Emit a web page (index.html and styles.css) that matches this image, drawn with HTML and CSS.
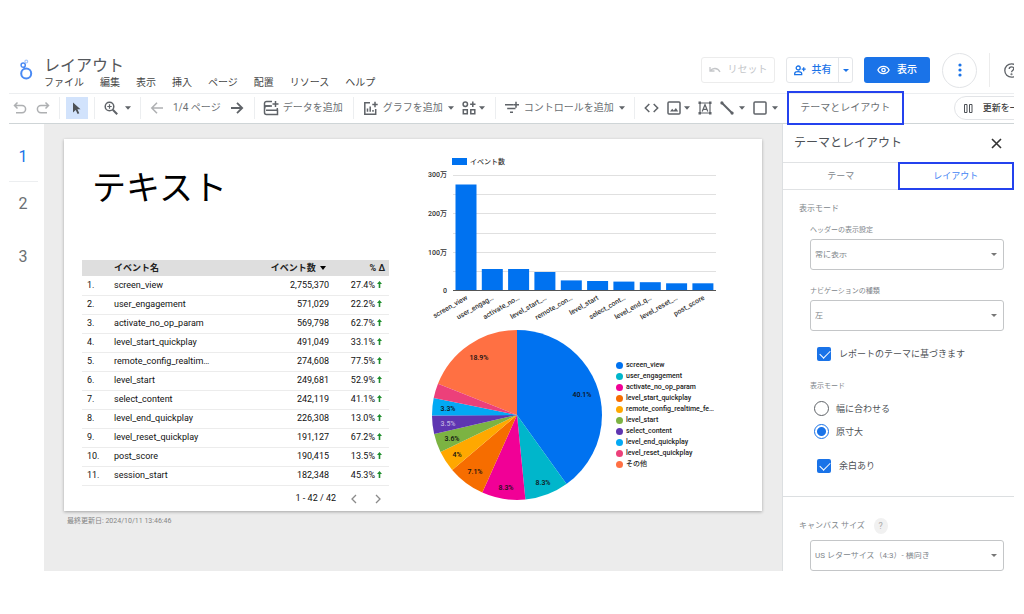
FILE: index.html
```html
<!DOCTYPE html>
<html lang="ja">
<head>
<meta charset="utf-8">
<title>レイアウト</title>
<link rel="stylesheet" href="styles.css">
</head>
<body>
<div class="app">
  <header class="header">
    <svg class="logo" width="14" height="22" viewBox="0 0 14 22" fill="none" stroke="#4a8af4">
      <circle cx="7.200" cy="14.600" r="5" stroke-width="2"/>
      <circle cx="4.200" cy="6.200" r="2.100" stroke-width="1.500"/>
      <circle cx="7.300" cy="2.600" r="1.400" stroke="#a9c8fa" stroke-width="1.200"/>
      <path d="M4.800 8.200l1 1.600" stroke-width="1.400"/>
    </svg>
    <div class="heading">
      <h1 class="doc-title">レイアウト</h1>
      <nav class="menu">
        <button>ファイル</button><button>編集</button><button>表示</button><button>挿入</button><button>ページ</button><button>配置</button><button>リソース</button><button>ヘルプ</button>
      </nav>
    </div>
    <div class="actions">
      <button class="btn btn-reset" disabled>
        <svg width="12" height="8" viewBox="0 0 12 8" fill="none" stroke="currentColor" stroke-width="1.300"><path d="M1 1v4h4.500M1.200 4.800C3.500 1.800 8.500 1.300 11 6"/></svg>
        リセット
      </button>
      <div class="split">
        <button class="btn-share">
          <svg width="12" height="11" viewBox="0 0 12 11" fill="none" stroke="currentColor" stroke-width="1.300"><circle cx="4.200" cy="3" r="2"/><path d="M.7 9.700V8.500c0-2.400 7-2.400 7 0v1.200zM9.700 2.200v4M7.700 4.200h4"/></svg>
          共有
        </button>
        <button class="btn-share-more" aria-label="共有オプション"><svg width="6" height="3" viewBox="0 0 6 3"><path d="M0 0h6L3 3z" fill="currentColor"/></svg></button>
      </div>
      <button class="btn btn-view">
        <svg width="13" height="10" viewBox="0 0 13 10" fill="none" stroke="currentColor" stroke-width="1.300"><path d="M.9 5C3.200.2 9.800.2 12.100 5 9.800 9.800 3.200 9.800.9 5z"/><circle cx="6.500" cy="5" r="1.700"/></svg>
        表示
      </button>
      <button class="btn-more" aria-label="その他"><svg width="4" height="14" viewBox="0 0 4 14" fill="currentColor"><circle cx="2" cy="2" r="1.600"/><circle cx="2" cy="7" r="1.600"/><circle cx="2" cy="12" r="1.600"/></svg></button>
      <div class="help-clip">
        <button class="btn-help" aria-label="ヘルプ"><svg width="15" height="15" viewBox="0 0 15 15" fill="none" stroke="currentColor" stroke-width="1.300"><circle cx="7.500" cy="7.500" r="6.700"/><path d="M5.200 6c0-3 4.600-2.800 4.600-.3 0 1.500-2.200 1.700-2.200 3.600"/><circle cx="7.500" cy="11.200" r=".4"/></svg></button>
      </div>
    </div>
  </header>

  <div class="toolbar">
    <div class="group g-history">
      <button class="faded" aria-label="元に戻す"><svg width="14" height="14" viewBox="0 0 14 14" class="line"><path d="M4.500 1.500L1.500 4.500l3 3M1.700 4.500h7.300a3.600 3.600 0 0 1 0 7.200H3"/></svg></button>
      <button class="faded" aria-label="やり直し"><svg width="14" height="14" viewBox="0 0 14 14" class="line"><path d="M9.500 1.500l3 3-3 3M12.300 4.500H5a3.600 3.600 0 0 0 0 7.200h6"/></svg></button>
    </div>
    <div class="group g-select">
      <button class="cursor" aria-label="選択"><svg width="10" height="13" viewBox="0 0 10 13"><path d="M1 .5l7.500 6.800H5.400l1.900 4-1.700.8-1.900-4L1 10.500z" fill="#4d5156"/></svg></button>
    </div>
    <div class="group g-zoom">
      <button aria-label="ズーム"><svg width="14" height="14" viewBox="0 0 14 14" class="line"><circle cx="5.500" cy="5.500" r="4.300"/><path d="M8.800 8.800l4.400 4.400" stroke-width="2"/><path d="M3.300 5.500h4.400M5.500 3.300v4.400" stroke-width="1.200"/></svg><svg class="caret" width="6" height="4" viewBox="0 0 7 4"><path d="M0 0h7L3.500 4z"/></svg></button>
    </div>
    <div class="group g-page">
      <button class="faded" aria-label="前のページ"><svg width="14" height="14" viewBox="0 0 14 14" class="line"><path d="M13 7H2M7 1.800L1.800 7 7 12.200"/></svg></button>
      <span>1/4 ページ</span>
      <button aria-label="次のページ"><svg width="14" height="14" viewBox="0 0 14 14" class="line strong"><path d="M1 7h11M7 1.800L12.200 7 7 12.200"/></svg></button>
    </div>
    <div class="group g-data">
      <button class="labelled"><svg width="16" height="16" viewBox="0 0 16 16" class="line"><path d="M9 1.500H3.500a2 2 0 0 0-2 2v9a2 2 0 0 0 2 2h11v-4.200H3M1.500 10.300c0-3 .5-4.200 2-4.200H9M14.300 8v3"/><path d="M1.500 6h6M12.500 1v6M9.500 4h6"/></svg>データを追加</button>
    </div>
    <div class="group g-chart">
      <button class="labelled"><svg width="15" height="15" viewBox="0 0 15 15" class="line"><path d="M7 1.800H1.800v11.400h10.900V8M4.500 10.800V7.500M7.200 10.800V5.500M10 10.800V9M12 .8v5.400M9.300 3.500h5.400"/></svg>グラフを追加<svg class="caret" width="6" height="4" viewBox="0 0 7 4"><path d="M0 0h7L3.500 4z"/></svg></button>
      <button class="tight" aria-label="コミュニティ ビジュアリゼーション"><svg width="14" height="14" viewBox="0 0 14 14" class="line"><circle cx="3.300" cy="3.300" r="2.200"/><path d="M1.300 8.800h4v4h-4zM8.800 8.800h4v4h-4zM10.800.6v5.400M8.100 3.300h5.400"/></svg><svg class="caret" width="6" height="4" viewBox="0 0 7 4"><path d="M0 0h7L3.500 4z"/></svg></button>
    </div>
    <div class="group">
      <button class="labelled"><svg width="14" height="14" viewBox="0 0 14 14" class="line"><path d="M0 3.800h8M2.200 7.500h8.300M5 11.300h3M11 .8v6M8.200 3.800H14"/></svg>コントロールを追加<svg class="caret" width="6" height="4" viewBox="0 0 7 4"><path d="M0 0h7L3.500 4z"/></svg></button>
    </div>
    <div class="group g-insert">
      <button aria-label="URL の埋め込み"><svg width="15" height="14" viewBox="0 0 15 14" class="line"><path d="M5.300 3L1.300 7l4 4M9.700 3l4 4-4 4"/></svg></button>
      <button class="tight" aria-label="画像"><svg width="14" height="14" viewBox="0 0 14 14" class="line"><rect x="1" y="1" width="12" height="12" rx="1"/><path d="M3 10.500l2.200-2.800 1.600 1.800L8.900 7l2.300 3.500z" fill="#5f6368" stroke="none"/></svg><svg class="caret" width="6" height="4" viewBox="0 0 7 4"><path d="M0 0h7L3.500 4z"/></svg></button>
      <button aria-label="テキスト"><svg width="14" height="14" viewBox="0 0 14 14" class="line"><path d="M2 2h10v10H2z" stroke-width="1.200"/><path d="M.5.500h2.500v2.500H.5zM11 .5h2.500v2.500H11zM.5 11h2.500v2.500H.5zM11 11h2.500v2.500H11z" fill="#5f6368" stroke="none"/><path d="M4.200 10.600L7 3.700l2.800 6.900M5.100 8.300h3.800" stroke-width="1.200"/></svg></button>
      <button class="wide" aria-label="線"><svg width="14" height="14" viewBox="0 0 14 14" class="line"><path d="M2 2l10 10" stroke-width="2"/><circle cx="1.900" cy="1.900" r="1.600" fill="#5f6368" stroke="none"/><circle cx="12.100" cy="12.100" r="1.600" fill="#5f6368" stroke="none"/></svg><svg class="caret" width="6" height="4" viewBox="0 0 7 4"><path d="M0 0h7L3.500 4z"/></svg></button>
      <button class="wide" aria-label="図形"><svg width="14" height="14" viewBox="0 0 14 14" class="line"><rect x="1" y="1" width="12" height="12" rx="1"/></svg><svg class="caret" width="6" height="4" viewBox="0 0 7 4"><path d="M0 0h7L3.500 4z"/></svg></button>
    </div>
    <button class="theme-btn">テーマとレイアウト</button>
    <div class="refresh">
      <button class="pill"><svg width="9" height="9" viewBox="0 0 9 9" fill="none" stroke="#4d5156" stroke-width="1"><path d="M.5.500h2.500v8H.5zM5.500.500H8v8H5.500z"/></svg>更新を一</button>
    </div>
  </div>

  <div class="workspace">
    <ol class="pages">
      <li class="current"><a href="#p1">1</a></li>
      <li><a href="#p2">2</a></li>
      <li><a href="#p3">3</a></li>
    </ol>

    <main class="canvas">
      <section class="report">
        <div class="col-table">
          <h2 class="report-title">テキスト</h2>
          <table class="events">
            <colgroup><col class="c-no"><col class="c-name"><col class="c-count"><col class="c-delta"></colgroup>
            <thead><tr><th></th><th>イベント名</th><th class="num">イベント数 <svg class="sort" width="6" height="4" viewBox="0 0 6 4"><path d="M0 0h6L3 4z"/></svg></th><th class="num last">% Δ</th></tr></thead>
            <tbody>
              <tr><td>1.</td><td>screen_view</td><td class="num">2,755,370</td><td class="num last">27.4%<svg class="up" width="5" height="7" viewBox="0 0 5 7"><path d="M2.500 0L5 3H3.300v4H1.700V3H0z"/></svg></td></tr>
              <tr><td>2.</td><td>user_engagement</td><td class="num">571,029</td><td class="num last">22.2%<svg class="up" width="5" height="7" viewBox="0 0 5 7"><path d="M2.500 0L5 3H3.300v4H1.700V3H0z"/></svg></td></tr>
              <tr><td>3.</td><td>activate_no_op_param</td><td class="num">569,798</td><td class="num last">62.7%<svg class="up" width="5" height="7" viewBox="0 0 5 7"><path d="M2.500 0L5 3H3.300v4H1.700V3H0z"/></svg></td></tr>
              <tr><td>4.</td><td>level_start_quickplay</td><td class="num">491,049</td><td class="num last">33.1%<svg class="up" width="5" height="7" viewBox="0 0 5 7"><path d="M2.500 0L5 3H3.300v4H1.700V3H0z"/></svg></td></tr>
              <tr><td>5.</td><td>remote_config_realtim…</td><td class="num">274,608</td><td class="num last">77.5%<svg class="up" width="5" height="7" viewBox="0 0 5 7"><path d="M2.500 0L5 3H3.300v4H1.700V3H0z"/></svg></td></tr>
              <tr><td>6.</td><td>level_start</td><td class="num">249,681</td><td class="num last">52.9%<svg class="up" width="5" height="7" viewBox="0 0 5 7"><path d="M2.500 0L5 3H3.300v4H1.700V3H0z"/></svg></td></tr>
              <tr><td>7.</td><td>select_content</td><td class="num">242,119</td><td class="num last">41.1%<svg class="up" width="5" height="7" viewBox="0 0 5 7"><path d="M2.500 0L5 3H3.300v4H1.700V3H0z"/></svg></td></tr>
              <tr><td>8.</td><td>level_end_quickplay</td><td class="num">226,308</td><td class="num last">13.0%<svg class="up" width="5" height="7" viewBox="0 0 5 7"><path d="M2.500 0L5 3H3.300v4H1.700V3H0z"/></svg></td></tr>
              <tr><td>9.</td><td>level_reset_quickplay</td><td class="num">191,127</td><td class="num last">67.2%<svg class="up" width="5" height="7" viewBox="0 0 5 7"><path d="M2.500 0L5 3H3.300v4H1.700V3H0z"/></svg></td></tr>
              <tr><td>10.</td><td>post_score</td><td class="num">190,415</td><td class="num last">13.5%<svg class="up" width="5" height="7" viewBox="0 0 5 7"><path d="M2.500 0L5 3H3.300v4H1.700V3H0z"/></svg></td></tr>
              <tr><td>11.</td><td>session_start</td><td class="num">182,348</td><td class="num last">45.3%<svg class="up" width="5" height="7" viewBox="0 0 5 7"><path d="M2.500 0L5 3H3.300v4H1.700V3H0z"/></svg></td></tr>
            </tbody>
          </table>
          <div class="pager">
            <span>1 - 42 / 42</span>
            <button aria-label="前へ"><svg width="6" height="10" viewBox="0 0 6 10"><path d="M5 1L1 5l4 4"/></svg></button>
            <button aria-label="次へ"><svg width="6" height="10" viewBox="0 0 6 10"><path d="M1 1l4 4-4 4"/></svg></button>
          </div>
        </div>

        <div class="col-charts">
          <svg class="bars" viewBox="0 0 290 170">
            <rect x="25" y="3" width="15" height="7" fill="#0072f0"/>
            <text x="43" y="9">イベント数</text>
            <g class="grid"><path d="M26 20.500h263M26 39.500h263M26 58.500h263M26 78.500h263M26 97.500h263M26 116.500h263"/></g>
            <g class="axis-y"><text x="20" y="22">300万</text><text x="20" y="61">200万</text><text x="20" y="100">100万</text><text x="20" y="138">0</text></g>
            <g fill="#0072f0">
              <rect x="28.500" y="29.500" width="21" height="106"/>
              <rect x="54.800" y="114" width="21" height="21.500"/>
              <rect x="81.100" y="114" width="21" height="21.500"/>
              <rect x="107.400" y="117" width="21" height="18.500"/>
              <rect x="133.800" y="125.400" width="21" height="10.100"/>
              <rect x="160.100" y="126" width="21" height="9.500"/>
              <rect x="186.400" y="126.600" width="21" height="8.900"/>
              <rect x="212.800" y="127.200" width="21" height="8.300"/>
              <rect x="239.100" y="128.300" width="21" height="7.200"/>
              <rect x="265.400" y="128.300" width="21" height="7.200"/>
            </g>
            <path d="M26 135.500h263" stroke="#555"/>
            <g class="axis-x">
              <text transform="translate(41 144) rotate(-30)">screen_view</text>
              <text transform="translate(67 144) rotate(-30)">user_engag…</text>
              <text transform="translate(93 144) rotate(-30)">activate_no…</text>
              <text transform="translate(120 144) rotate(-30)">level_start_…</text>
              <text transform="translate(146 144) rotate(-30)">remote_con…</text>
              <text transform="translate(172 144) rotate(-30)">level_start</text>
              <text transform="translate(199 144) rotate(-30)">select_cont…</text>
              <text transform="translate(225 144) rotate(-30)">level_end_q…</text>
              <text transform="translate(251 144) rotate(-30)">level_reset_…</text>
              <text transform="translate(278 144) rotate(-30)">post_score</text>
            </g>
          </svg>
          <div class="pie-row">
            <svg class="pie" viewBox="0 0 170 170">
              <g fill="none" stroke-width="85" transform="rotate(-90 85 85)">
                <circle cx="85" cy="85" r="42.500" pathLength="100" stroke="#ff7043" stroke-dasharray="19 81" stroke-dashoffset="-81"/>
                <circle cx="85" cy="85" r="42.500" pathLength="100" stroke="#0072f0" stroke-dasharray="40.100 59.900"/>
                <circle cx="85" cy="85" r="42.500" pathLength="100" stroke="#00b6cb" stroke-dasharray="8.300 91.700" stroke-dashoffset="-40.100"/>
                <circle cx="85" cy="85" r="42.500" pathLength="100" stroke="#f10096" stroke-dasharray="8.300 91.700" stroke-dashoffset="-48.400"/>
                <circle cx="85" cy="85" r="42.500" pathLength="100" stroke="#f66d00" stroke-dasharray="7.100 92.900" stroke-dashoffset="-56.700"/>
                <circle cx="85" cy="85" r="42.500" pathLength="100" stroke="#ffa800" stroke-dasharray="4 96" stroke-dashoffset="-63.800"/>
                <circle cx="85" cy="85" r="42.500" pathLength="100" stroke="#7cb342" stroke-dasharray="3.600 96.400" stroke-dashoffset="-67.800"/>
                <circle cx="85" cy="85" r="42.500" pathLength="100" stroke="#5e35b1" stroke-dasharray="3.500 96.500" stroke-dashoffset="-71.400"/>
                <circle cx="85" cy="85" r="42.500" pathLength="100" stroke="#03a9f4" stroke-dasharray="3.300 96.700" stroke-dashoffset="-74.900"/>
                <circle cx="85" cy="85" r="42.500" pathLength="100" stroke="#ec407a" stroke-dasharray="2.800 97.200" stroke-dashoffset="-78.200"/>
              </g>
              <g class="shares">
                <text x="150" y="67">40.1%</text><text x="111" y="155">8.3%</text><text x="74" y="160">8.3%</text><text x="43" y="144">7.1%</text><text x="25" y="127">4%</text><text x="20" y="111">3.6%</text><text x="16" y="96" class="light">3.5%</text><text x="16" y="81">3.3%</text><text x="47" y="30">18.9%</text>
              </g>
            </svg>
            <ul class="legend">
              <li class="k1">screen_view</li>
              <li class="k2">user_engagement</li>
              <li class="k3">activate_no_op_param</li>
              <li class="k4">level_start_quickplay</li>
              <li class="k5">remote_config_realtime_fe…</li>
              <li class="k6">level_start</li>
              <li class="k7">select_content</li>
              <li class="k8">level_end_quickplay</li>
              <li class="k9">level_reset_quickplay</li>
              <li class="k10">その他</li>
            </ul>
          </div>
        </div>
      </section>
      <p class="updated">最終更新日: 2024/10/11 13:46:46</p>
    </main>

    <aside class="panel">
      <div class="panel-head">
        <h2>テーマとレイアウト</h2>
        <button aria-label="閉じる"><svg width="11" height="11" viewBox="0 0 11 11"><path d="M1 1l9 9M10 1l-9 9" stroke="#333" stroke-width="1.600"/></svg></button>
      </div>
      <div class="tabs"><button>テーマ</button><button class="active">レイアウト</button></div>
      <div class="section">
        <h3>表示モード</h3>
        <div class="fields">
          <label class="caption" for="head">ヘッダーの表示設定</label>
          <div class="select"><select id="head"><option>常に表示</option></select></div>
          <label class="caption second" for="nav">ナビゲーションの種類</label>
          <div class="select"><select id="nav"><option>左</option></select></div>
          <label class="check"><input type="checkbox" checked>レポートのテーマに基づきます</label>
          <fieldset>
            <legend class="caption">表示モード</legend>
            <label class="radio"><input type="radio" name="mode">幅に合わせる</label>
            <label class="radio"><input type="radio" name="mode" checked>原寸大</label>
          </fieldset>
          <label class="check"><input type="checkbox" checked>余白あり</label>
        </div>
      </div>
      <div class="section canvas-size">
        <h3><label for="size">キャンバス サイズ</label><button class="hint" aria-label="ヘルプ">?</button></h3>
        <div class="fields"><div class="select"><select id="size"><option>US レターサイズ（4:3）- 横向き</option></select></div></div>
      </div>
    </aside>
  </div>
</div>
</body>
</html>
```
FILE: styles.css
```css
* { box-sizing: border-box; }
body {
  margin: 0;
  background: #fff;
  color: #5f6368;
  font: 10px/1 Roboto, "Noto Sans CJK JP", sans-serif;
}
button {
  display: flex;
  align-items: center;
  justify-content: center;
  flex-shrink: 0;
  padding: 0;
  border: 0;
  background: none;
  color: inherit;
  font: inherit;
  line-height: 14px;
  white-space: nowrap;
}
h1, h2, h3, p, ul, ol { margin: 0; padding: 0; font-weight: 400; list-style: none; }
svg { display: block; flex-shrink: 0; }
.app { padding: 50px 10px 42px 9px; overflow: hidden; }

/* header */
.header { display: flex; height: 43px; }
.logo { margin: 9px 11px 0 10px; }
.heading { padding-top: 6px; }
.doc-title { color: #55585c; font-size: 16px; line-height: 20px; }
.menu { display: flex; gap: 16px; color: #444; }
.actions { display: flex; align-items: center; margin-left: auto; padding-bottom: 3px; }
.btn { height: 26px; gap: 7px; border-radius: 3px; }
.btn-reset { width: 74px; margin-right: 11px; border: 1px solid #ececec; color: #c4c6c9; }
.split { display: flex; height: 26px; margin-right: 11px; border: 1px solid #e4e6e9; border-radius: 3px; color: #1a73e8; font-weight: 500; }
.btn-share { width: 51px; gap: 6px; }
.btn-share-more { width: 14px; border-left: 1px solid #e4e6e9; }
.btn-view { width: 66px; margin-right: 12px; background: #1a73e8; color: #fff; font-weight: 500; }
.btn-more { width: 35px; height: 35px; margin-right: 12px; border: 1px solid #e2e4e7; border-radius: 50%; color: #1a73e8; }
.help-clip { display: flex; align-items: center; width: 25px; height: 34px; padding-left: 14px; border-left: 1px solid #ececec; overflow: hidden; }

/* toolbar */
.toolbar { display: flex; align-items: center; height: 31px; padding-bottom: 1px; border-top: 1px solid #eceef0; border-bottom: 1px solid #cfd5d7; color: #6b6f73; }
.line { fill: none; stroke: #5f6368; stroke-width: 1.5; }
.strong { stroke-width: 1.8; }
.faded { opacity: .5; }
.caret { fill: #5f6368; }
.group { display: flex; align-items: center; flex-shrink: 0; gap: 9px; height: 22px; padding: 0 9px; border-right: 1px solid #eceef0; white-space: nowrap; }
.group button { gap: 5px; }
.group .tight { gap: 3px; }
.g-history { padding-left: 4px; }
.g-select { padding: 0 6px; }
.cursor { width: 22px; height: 22px; background: #d2e3fc; }
.g-zoom button { gap: 7px; }
.g-data { padding: 0 10px 0 8px; }
.g-data .labelled { gap: 4px; }
.g-chart { gap: 8px; }
.g-chart, .g-page { padding-right: 10px; }
.g-insert { gap: 8px; border: 0; }
.theme-btn { position: relative; width: 117px; height: 34px; border: 2px solid #2442ee; }
.refresh { flex: 1; padding-left: 50px; overflow: hidden; }
.pill { gap: 10px; height: 24px; padding: 0 16px 0 9px; border: 1px solid #e2e4e7; border-radius: 12px; color: #444; font-size: 9px; font-weight: 500; }

/* workspace */
.workspace { display: grid; grid-template-columns: 35px minmax(0, 1fr) 232px; }
.pages { font-size: 16px; line-height: 16px; text-align: center; }
.pages li { padding: 14px 7px 23px 0; }
.pages .current { margin-right: 6px; padding: 25px 1px 16px 0; border-bottom: 1px solid #eceef0; }
.pages a { color: #6b6f73; text-decoration: none; }
.pages .current a { color: #1a73e8; }
.canvas { padding: 15px 20px 0; background: #ececec; }
.report {
  display: grid;
  grid-template-columns: minmax(0, 307fr) minmax(0, 290fr);
  gap: 38px;
  padding: 0 45px 7px 18px;
  background: #fff;
  color: #222;
  box-shadow: 0 1px 3px rgba(0, 0, 0, .3);
}
.report-title { padding: 29px 0 52px 10px; color: #000; font-size: 34px; line-height: 40px; }
.events { width: 100%; border-collapse: collapse; table-layout: fixed; font-size: 9px; }
.events th, .events td { height: 19px; padding: 0; text-align: left; white-space: nowrap; }
.events th { height: 16px; background: #dedede; font-weight: 700; }
.events td { border-bottom: 1px solid #ececec; color: #111; }
.events td:first-child { padding-left: 5px; }
.events .num { text-align: right; }
.events td.last { padding-right: 7px; }
.events th.last { padding-right: 4px; }
.c-no { width: 32px; }
.c-count { width: 90px; }
.c-delta { width: 60px; }
.sort { display: inline-block; margin: 0 3px 1px 2px; vertical-align: middle; }
.up { display: inline-block; margin-left: 2px; fill: #1e8e2e; }
.pager { display: flex; align-items: center; justify-content: flex-end; gap: 18px; padding: 8px 8px 0; font-size: 9px; }
.pager span { margin-right: -3px; color: #111; }
.pager svg { fill: none; stroke: #8a8a8a; stroke-width: 1.3; }
.updated { padding: 7px 3px; color: #858585; font-size: 7px; }

/* charts */
.col-charts { padding-top: 16px; }
.col-charts text { font-size: 7px; font-weight: 500; fill: #333; }
.col-charts .shares text { fill: #111; }
.bars { width: 100%; }
.grid { stroke: #e0e0e0; }
.axis-y, .axis-x { text-anchor: end; }
.pie-row { display: flex; align-items: center; gap: 14px; padding: 5px 0 0 5px; }
.pie { width: 170px; }
.shares { text-anchor: middle; }
.col-charts .shares .light { fill: #bfb0e0; }
.legend { font-size: 7px; font-weight: 500; line-height: 11px; white-space: nowrap; }
.legend li { display: flex; align-items: center; gap: 3px; }
.legend li::before { content: ""; width: 7px; height: 7px; border-radius: 50%; background: currentColor; }
.k1::before { color: #0072f0; }
.k2::before { color: #00b6cb; }
.k3::before { color: #f10096; }
.k4::before { color: #f66d00; }
.k5::before { color: #ffa800; }
.k6::before { color: #7cb342; }
.k7::before { color: #5e35b1; }
.k8::before { color: #03a9f4; }
.k9::before { color: #ec407a; }
.k10::before { color: #ff7043; }

/* side panel */
.panel { border-left: 1px solid #dcdfe1; color: #80868b; }
.panel-head { display: flex; align-items: center; justify-content: space-between; height: 38px; padding: 0 12px 0 11px; }
.panel-head h2 { color: #4d5156; font-size: 12px; }
.tabs { display: grid; grid-template-columns: 1fr 1fr; height: 28px; border: 1px solid #e0e2e4; border-width: 1px 0; font-size: 9px; }
.tabs .active { margin: -1px 0 -1px -1px; border: 2px solid #2442ee; color: #4285f4; }
.section { padding: 13px 10px 0 16px; }
.section h3 { display: flex; align-items: center; gap: 9px; font-size: 8px; line-height: 12px; }
.fields { padding-left: 11px; }
.caption { display: block; padding: 10px 0 4px; font-size: 7px; line-height: 10px; }
.second { padding-top: 16px; }
.select { position: relative; }
.select::after { content: ""; position: absolute; top: 14px; right: 7px; border: 3px solid transparent; border-top-color: #777; border-bottom: 0; pointer-events: none; }
.select select { display: block; width: 100%; height: 31px; padding: 0 4px; border: 1px solid #c4c6c8; border-radius: 3px; background: #fff; color: #80868b; font: inherit; font-size: 8px; appearance: none; }
.check, .radio { display: flex; align-items: center; color: #4d5156; font-size: 9px; line-height: 14px; }
.check { gap: 8px; padding: 16px 0 0 7px; }
.radio { gap: 7px; padding: 4px 0 4px 4px; }
.check input, .radio input { margin: 0; appearance: none; }
.check input { width: 14px; height: 14px; border-radius: 2px; background: #1a73e8; }
.check input:checked::after { content: ""; display: block; width: 9px; height: 5px; margin: 3px 0 0 3px; border: solid #fff; border-width: 0 0 1px 1px; transform: rotate(-45deg); }
.radio input { width: 15px; height: 15px; border: 1px solid #5f6368; border-radius: 50%; }
.radio input:checked { border-color: #1a73e8; background: radial-gradient(#1a73e8 4px, transparent 5px); }
fieldset { margin: 0; padding: 2px 0 0; border: 0; }
fieldset .caption { padding-top: 20px; }
.canvas-size { margin-top: 23px; padding-top: 21px; border-top: 1px solid #dcdfe1; }
.canvas-size h3 { padding-bottom: 6px; }
.hint { width: 14px; height: 16px; border-radius: 50%; background: #f1f1f1; color: #aaa; font-size: 9px; }
```
